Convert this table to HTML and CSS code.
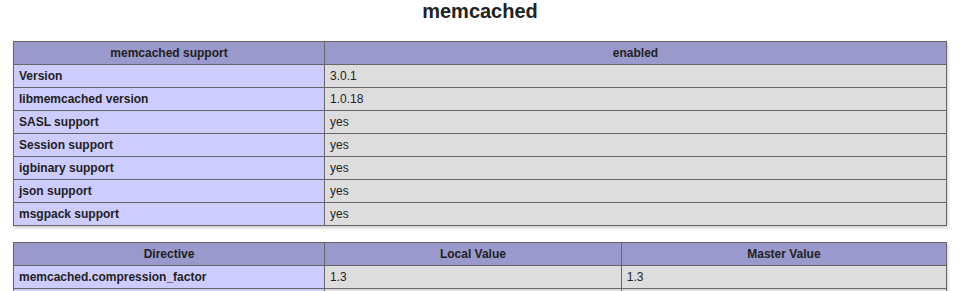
FILE: index.html
```html
<!DOCTYPE html>
<html>
<head>
<meta charset="utf-8">
<title>memcached</title>
<link rel="stylesheet" href="styles.css">
</head>
<body>
<div class="center">
<h2>memcached</h2>
<table>
<tr class="h"><th>memcached support</th><th>enabled</th></tr>
<tr><td class="e">Version </td><td class="v">3.0.1 </td></tr>
<tr><td class="e">libmemcached version </td><td class="v">1.0.18 </td></tr>
<tr><td class="e">SASL support </td><td class="v">yes </td></tr>
<tr><td class="e">Session support </td><td class="v">yes </td></tr>
<tr><td class="e">igbinary support </td><td class="v">yes </td></tr>
<tr><td class="e">json support </td><td class="v">yes </td></tr>
<tr><td class="e">msgpack support </td><td class="v">yes </td></tr>
</table>
<table>
<tr class="h"><th>Directive</th><th>Local Value</th><th>Master Value</th></tr>
<tr><td class="e">memcached.compression_factor</td><td class="v">1.3</td><td class="v">1.3</td></tr>
<tr><td class="e">memcached.compression_threshold</td><td class="v">2000</td><td class="v">2000</td></tr>
</table>
</div>
</body>
</html>
```
FILE: styles.css
```css
body {
  background-color: #fff;
  color: #222;
  font-family: "Liberation Sans", Arial, sans-serif;
  margin: 0 9px 0 7px;
}
.center {
  text-align: center;
}
h2 {
  font-size: 20px;
  margin: 0 0 18px;
  line-height: 23px;
}
table {
  border-collapse: collapse;
  border: 0;
  width: 934px;
  box-shadow: 1px 2px 3px #ccc;
  margin: 1em auto;
  text-align: left;
}
td, th {
  border: 1px solid #666;
  font-size: 12px;
  vertical-align: baseline;
  padding: 4px 5px;
  line-height: 14px;
}
th {
  text-align: center;
}
.h {
  background-color: #99c;
  font-weight: bold;
}
.e {
  background-color: #ccf;
  width: 300px;
  font-weight: bold;
}
.v {
  background-color: #ddd;
  max-width: 300px;
  overflow-x: auto;
  word-wrap: break-word;
}
```
